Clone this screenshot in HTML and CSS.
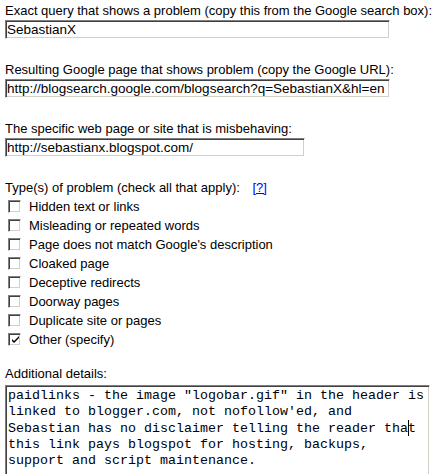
FILE: index.html
```html
<!DOCTYPE html>
<html>
<head>
<meta charset="utf-8">
<link rel="stylesheet" href="styles.css">
</head>
<body>
<form class="form">
  <div class="field">
    <label class="label">Exact query that shows a problem (copy this from the Google search box):</label>
    <input class="text w385" type="text" value="SebastianX">
  </div>
  <div class="field">
    <label class="label">Resulting Google page that shows problem (copy the Google URL):</label>
    <input class="text w385" type="text" value="http://blogsearch.google.com/blogsearch?q=SebastianX&amp;hl=en">
  </div>
  <div class="field">
    <label class="label">The specific web page or site that is misbehaving:</label>
    <input class="text w300" type="text" value="http://sebastianx.blogspot.com/">
  </div>
  <div class="types">
    <div class="label">Type(s) of problem (check all that apply): <a class="help" href="#">[?]</a></div>
    <ul class="checks">
      <li class="row"><span class="box"></span><span>Hidden text or links</span></li>
      <li class="row"><span class="box"></span><span>Misleading or repeated words</span></li>
      <li class="row"><span class="box"></span><span>Page does not match Google's description</span></li>
      <li class="row"><span class="box"></span><span>Cloaked page</span></li>
      <li class="row"><span class="box"></span><span>Deceptive redirects</span></li>
      <li class="row"><span class="box"></span><span>Doorway pages</span></li>
      <li class="row"><span class="box"></span><span>Duplicate site or pages</span></li>
      <li class="row"><span class="box"><svg class="tick" width="9" height="9" viewBox="0 0 9 9"><path d="M1 3 L1 5 L3 7 L8 2 L8 0 L3 5 Z" fill="#000"/></svg></span><span>Other (specify)</span></li>
    </ul>
  </div>
  <div class="details">
    <div class="label">Additional details:</div>
    <div class="area"><div class="area-text">paidlinks - the image "logobar.gif" in the header is<br>linked to blogger.com, not nofollow'ed, and<br>Sebastian has no disclaimer telling the reader tha<span class="caret"></span>t<br>this link pays blogspot for hosting, backups,<br>support and script maintenance.</div></div>
  </div>
</form>
</body>
</html>
```
FILE: styles.css
```css
html, body {
  margin: 0;
  padding: 0;
  background: #fff;
  overflow: hidden;
}
.form {
  display: flex;
  flex-direction: column;
  padding: 3px 0 0 5px;
  margin: 0;
  font-family: "Liberation Sans", Arial, sans-serif;
  font-size: 13px;
  color: #000;
}
.label {
  display: block;
  line-height: 15px;
  height: 15px;
  white-space: nowrap;
}
.field {
  display: flex;
  flex-direction: column;
  align-items: flex-start;
  gap: 2px;
  margin-bottom: 23px;
}
.text {
  box-sizing: border-box;
  height: 19px;
  margin: 0;
  padding: 0 1px;
  font-family: "Liberation Sans", Arial, sans-serif;
  font-size: 13.5px;
  color: #000;
  background: #fff;
  border: 1px solid;
  border-color: #808080 #ffffff #ffffff #808080;
  box-shadow: inset 1px 1px 0 #404040, inset -1px -1px 0 #d4d0c8;
  outline: none;
}
.w385 { width: 385px; }
.w300 { width: 300px; }
.help {
  color: #0000ff;
  text-decoration: underline;
  margin-left: 9px;
}
.checks {
  list-style: none;
  margin: 2px 0 0 0;
  padding: 0;
}
.row {
  display: flex;
  align-items: center;
  height: 19px;
  gap: 8px;
  padding-left: 3px;
}
.box {
  box-sizing: border-box;
  width: 13px;
  height: 13px;
  flex: none;
  background: #fff;
  border: 1px solid;
  border-color: #808080 #ffffff #ffffff #808080;
  box-shadow: inset 1px 1px 0 #404040, inset -1px -1px 0 #d4d0c8;
  display: flex;
  align-items: center;
  justify-content: center;
  padding: 1px 0 0 1px;
}
.tick { display: block; }
.details {
  margin-top: 17px;
  display: flex;
  flex-direction: column;
  gap: 4px;
}
.area {
  box-sizing: border-box;
  width: 425px;
  height: 110px;
  overflow: hidden;
  background: #fff;
  border: 1px solid;
  border-color: #808080 #ffffff #ffffff #808080;
  box-shadow: inset 1px 1px 0 #404040, inset -1px -1px 0 #d4d0c8;
  padding: 1px 2px 0 2px;
}
.area-text {
  font-family: "Liberation Mono", "Courier New", monospace;
  font-size: 13.33px;
  line-height: 16px;
  white-space: nowrap;
  margin-top: 1px;
}
.caret {
  display: inline-block;
  width: 0;
  height: 16px;
  border-left: 1px solid #000;
  margin-right: -1px;
  vertical-align: -4px;
}
```
